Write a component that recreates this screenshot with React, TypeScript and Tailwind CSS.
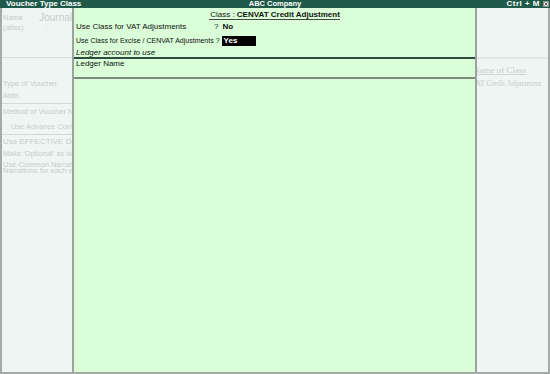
export default function App() {
  return (
    <div className="w-[550px] h-[374px] overflow-hidden flex flex-col bg-[#eef6f4] font-['Liberation_Sans',Arial,sans-serif]">
      {/* Title bar */}
      <div className="h-[8px] bg-[#1f5a48] text-white font-bold text-[8px] leading-[8px] grid grid-cols-[1fr_auto_1fr] items-center">
        <div className="pl-[6px] whitespace-nowrap">Voucher Type Class</div>
        <div className="whitespace-nowrap text-[7.5px]">ABC Company</div>
        <div className="flex justify-end items-center gap-[3px] pr-[1px]">
          <span className="whitespace-nowrap tracking-[0.5px]">Ctrl + M</span>
          <span className="w-[6px] h-[6px] bg-[#e8ecea] border border-[#8a948f] flex items-center justify-center">
            <svg width="4" height="4" viewBox="0 0 4 4">
              <path d="M0.5 0.5L3.5 3.5M3.5 0.5L0.5 3.5" stroke="#333" strokeWidth="0.8" />
            </svg>
          </span>
        </div>
      </div>

      <div className="flex-1 flex border-b-2 border-[#a3aaa7]">
        {/* Left background panel */}
        <div className="w-[72px] shrink-0 border-l-2 border-[#a3aaa7] overflow-hidden text-[#c6cdcc] text-[7.5px] whitespace-nowrap">
          <div className="h-[5px]" />
          <div className="h-[10px] leading-[10px] flex pl-[1px]">
            <span className="w-[40px]">Name</span>
            <span>:</span>
            <span className="ml-[6px] text-[10px]">Journal</span>
          </div>
          <div className="h-[9px] leading-[9px] flex pl-[1px]">
            <span className="w-[42px]">(alias)</span>
            <span>:</span>
          </div>
          <div className="h-[25px]" />
          <div className="h-[1px] bg-[#d3dbd9]" />
          <div className="h-[20px]" />
          <div className="h-[12px] leading-[12px] pl-[1px]">Type of Voucher</div>
          <div className="h-[12px] leading-[12px] pl-[1px]">Abbr.</div>
          <div className="h-[1px] mt-[1px] bg-[#d3dbd9]" />
          <div className="h-[2px]" />
          <div className="h-[12px] leading-[12px] pl-[1px]">Method of Voucher Numbering</div>
          <div className="h-[12px] leading-[12px] pl-[9px] mt-[3px]">Use Advance Configuration</div>
          <div className="h-[1px] mt-[1px] bg-[#d3dbd9]" />
          <div className="h-[12px] leading-[12px] pl-[1px] mt-[1px] text-[8px]">Use EFFECTIVE Dates</div>
          <div className="h-[12px] leading-[12px] pl-[1px]">Make 'Optional' as default</div>
          <div className="h-[6px] leading-[6px] pl-[1px] mt-[2px]">Use Common Narration</div>
          <div className="h-[6px] leading-[6px] pl-[1px]">Narrations for each entry</div>
        </div>

        {/* Main sub-screen */}
        <div className="w-[405px] shrink-0 bg-[#d9fed8] border-x-2 border-[#9aa39e] text-[8px] text-[#111] flex flex-col">
          <div className="h-[12px] pt-[3px] leading-[8px] flex justify-center">
            <span className="inline-block leading-[8px] border-b border-[#444] whitespace-nowrap pl-[1px]">
              Class : <span className="font-bold">CENVAT Credit Adjustment</span>
            </span>
          </div>
          <div className="h-[14px] leading-[14px] flex pl-[2px] whitespace-nowrap">
            <span className="w-[138px]">Use Class for VAT Adjustments</span>
            <span>?</span>
            <span className="ml-[4px] font-bold">No</span>
          </div>
          <div className="h-[14px] flex items-center pl-[2px] whitespace-nowrap">
            <span className="text-[7px] leading-[10px]">Use Class for Excise / CENVAT Adjustments ?</span>
            <span className="ml-[2px] w-[34px] h-[10px] bg-black text-white font-bold leading-[10px] pl-[2px]">Yes</span>
          </div>
          <div className="h-[9px] leading-[9px] pl-[2px] italic whitespace-nowrap">Ledger account to use</div>
          <div className="h-[2px] bg-[#2f4c3e]" />
          <div className="h-[18px] pl-[2px] leading-[10px] whitespace-nowrap">Ledger Name</div>
          <div className="h-[2px] bg-[#7d897f]" />
          <div className="flex-1" />
        </div>

        {/* Right background panel */}
        <div className="flex-1 border-r-2 border-[#a3aaa7] overflow-hidden text-[#c6cdcc] font-['Liberation_Serif','Times_New_Roman',serif] whitespace-nowrap">
          <div className="h-[49px]" />
          <div className="h-[2px] bg-[#dfe6e4]" />
          <div className="h-[7px]" />
          <div className="h-[9px] text-[9px] leading-[8px] ml-[-4px]">
            <span className="inline-block leading-[8px] border-b border-[#cfd6d5]">Name of Class</span>
          </div>
          <div className="h-[4px]" />
          <div className="h-[10px] leading-[10px] text-[7.5px] ml-[-21px]">CENVAT Credit Adjustment</div>
        </div>
      </div>
    </div>
  );
}
